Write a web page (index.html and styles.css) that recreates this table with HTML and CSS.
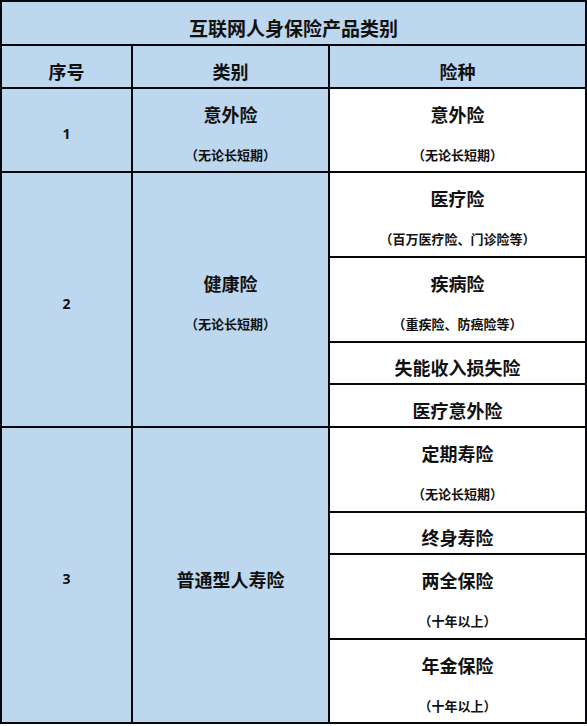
FILE: index.html
```html
<!DOCTYPE html>
<html lang="zh-CN">
<head>
<meta charset="utf-8">
<title>互联网人身保险产品类别</title>
<link rel="stylesheet" href="styles.css">
</head>
<body>
<div class="table">
  <div class="cell blue title"><span class="main">互联网人身保险产品类别</span></div>

  <div class="cell blue"><span class="main">序号</span></div>
  <div class="cell blue"><span class="main">类别</span></div>
  <div class="cell blue c3"><span class="main">险种</span></div>

  <div class="cell blue"><span class="num">1</span></div>
  <div class="cell blue"><span class="main">意外险</span><span class="sub">（无论长短期）</span></div>
  <div class="cell white c3"><span class="main">意外险</span><span class="sub">（无论长短期）</span></div>

  <div class="cell blue span4"><span class="num">2</span></div>
  <div class="cell blue span4"><span class="main">健康险</span><span class="sub">（无论长短期）</span></div>
  <div class="cell white c3"><span class="main">医疗险</span><span class="sub">（百万医疗险、门诊险等）</span></div>
  <div class="cell white c3"><span class="main">疾病险</span><span class="sub">（重疾险、防癌险等）</span></div>
  <div class="cell white c3"><span class="main">失能收入损失险</span></div>
  <div class="cell white c3"><span class="main">医疗意外险</span></div>

  <div class="cell blue span4"><span class="num">3</span></div>
  <div class="cell blue span4"><span class="main">普通型人寿险</span></div>
  <div class="cell white c3"><span class="main">定期寿险</span><span class="sub">（无论长短期）</span></div>
  <div class="cell white c3"><span class="main">终身寿险</span></div>
  <div class="cell white c3"><span class="main">两全保险</span><span class="sub">（十年以上）</span></div>
  <div class="cell white c3"><span class="main">年金保险</span><span class="sub">（十年以上）</span></div>
</div>
</body>
</html>
```

FILE: styles.css
```css
html, body {
  margin: 0;
  padding: 0;
  background: #ffffff;
}

body {
  font-family: "Noto Sans CJK SC", "Noto Sans", sans-serif;
  color: #111111;
}

.table {
  display: grid;
  width: 587px;
  box-sizing: border-box;
  padding: 2px;
  gap: 2px;
  background: #05070d;
  grid-template-columns: 129px 195px 255px;
  grid-template-rows: 42px 41px 82px 83px 83px 40px 41px 83px 40px 83px 82px;
}

.cell {
  display: flex;
  flex-direction: column;
  align-items: center;
  justify-content: center;
  padding-top: 8px;
  box-sizing: border-box;
  min-height: 0;
}

.blue {
  background: #bdd7ee;
}

.white {
  background: #ffffff;
}

.title {
  grid-column: 1 / 4;
}

.c3 {
  grid-column: 3;
}

.span4 {
  grid-row: span 4;
}

.main {
  font-size: 18px;
  line-height: 24px;
  font-weight: 700;
}

.title .main {
  font-size: 19px;
  padding-top: 2px;
}

.sub {
  margin-top: 17px;
  font-size: 13px;
  line-height: 24px;
  font-weight: 700;
}

.num {
  font-family: "Noto Sans", "Liberation Sans", sans-serif;
  font-size: 14px;
  line-height: 24px;
  font-weight: 700;
}
```
